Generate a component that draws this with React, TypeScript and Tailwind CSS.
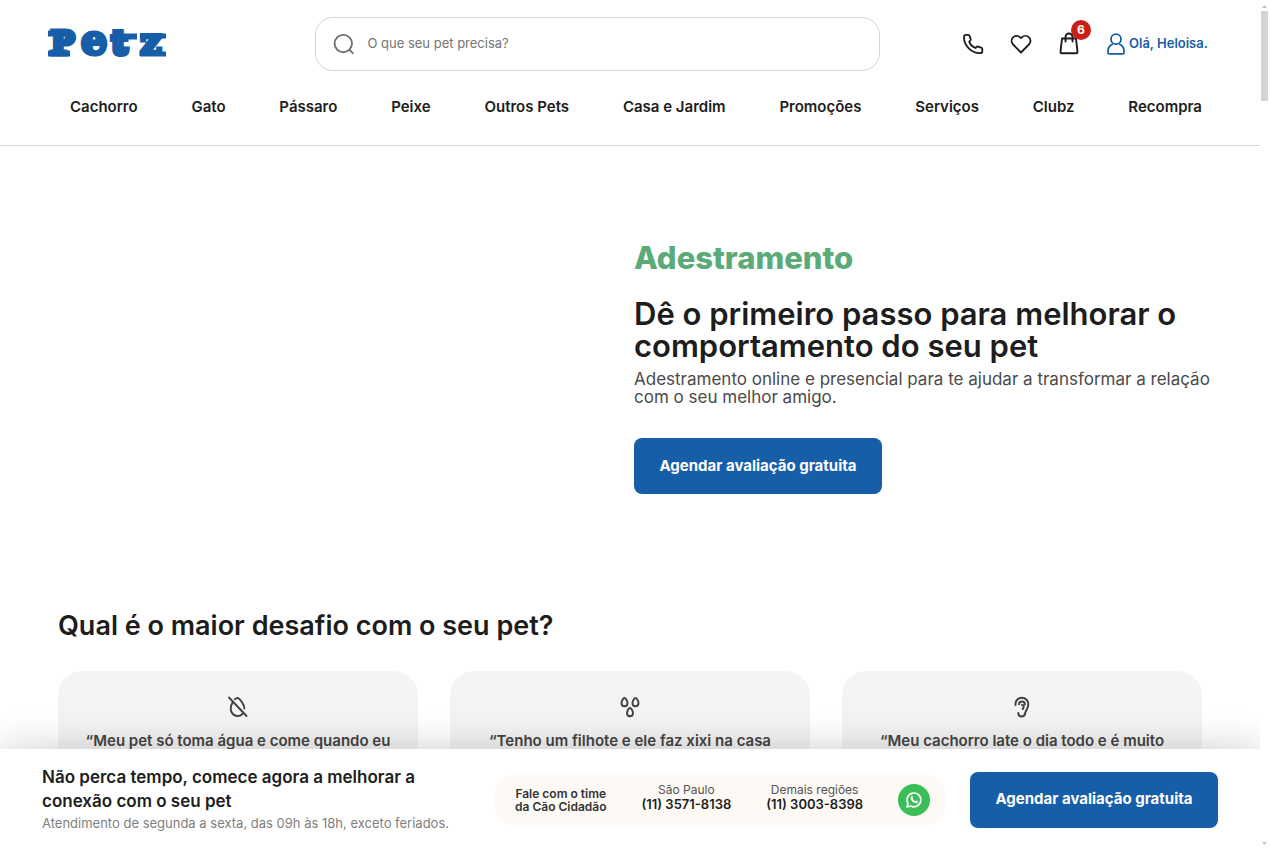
import type { ReactNode } from "react";

const navItems = [
  "Cachorro",
  "Gato",
  "Pássaro",
  "Peixe",
  "Outros Pets",
  "Casa e Jardim",
  "Promoções",
  "Serviços",
  "Clubz",
  "Recompra",
];

function Logo() {
  return (
    <svg
      className="-my-4"
      width="124"
      height="60"
      viewBox="0 -4 124 60"
      role="img"
      aria-label="Petz"
      fill="#175ea9"
      stroke="#175ea9"
      fontWeight="700"
      fontFamily="'DejaVu Serif', serif"
    >
      <path d="M0 12.500h22v6H0zM0 32.500h22v6H0zM66 15.500h23v6H66zM92 15.500h26v5H92zM92 33.500h26v5H92z" stroke="none" />
      <text y="36" x="3" fontSize="31" strokeWidth="5">P</text>
      <text y="36" x="33" fontSize="41" strokeWidth="4">e</text>
      <text y="36" x="64" fontSize="32" strokeWidth="6">t</text>
      <text y="36" x="92" fontSize="38" strokeWidth="4">z</text>
    </svg>
  );
}

function SearchIcon() {
  return (
    <svg width="24" height="24" viewBox="0 0 24 24" fill="none" stroke="#6f6f6f" strokeWidth="2" strokeLinecap="round">
      <circle cx="11" cy="11.5" r="9.3" />
      <path d="m17.700 18.200 3.500 3.500" />
    </svg>
  );
}

function PhoneIcon() {
  return (
    <svg width="24" height="24" viewBox="0 0 24 24" fill="none" stroke="currentColor" strokeWidth="1.8" strokeLinejoin="round">
      <path d="M3 5.2C3 4 4 2.9 5.200 2.900h2c.7 0 1.300.4 1.500 1.100l1 3.100c.2.600 0 1.200-.500 1.600l-1 .9c1 2.900 3.400 5.300 6.300 6.400l1-1c.4-.5 1-.6 1.600-.4l3.100 1c.7.2 1.100.8 1.100 1.500v1.800c0 1.300-1 2.300-2.300 2.300C10.400 21.200 3 13.600 3 5.200Z" />
    </svg>
  );
}

function HeartIcon() {
  return (
    <svg width="24" height="24" viewBox="0 0 24 24" fill="none" stroke="currentColor" strokeWidth="1.800" strokeLinejoin="round">
      <path d="M12 20.500 4.100 12.500A5.200 5.200 0 0 1 4 5.300c2-2 5.200-2 7.200 0l.8.8.8-.8c2-2 5.200-2 7.200 0s2 5.200-.1 7.200Z" />
    </svg>
  );
}

function BagIcon() {
  return (
    <svg width="24" height="24" viewBox="0 0 24 24" fill="none" stroke="currentColor" strokeWidth="1.900" strokeLinejoin="round" strokeLinecap="round">
      <path d="M5 6.500h14l1.500 13.400c.1.700-.4 1.300-1.100 1.300H4.600c-.7 0-1.200-.6-1.100-1.300Z" />
      <path d="M8.500 9.500V5a3.500 3.500 0 0 1 7 0v4.500" />
    </svg>
  );
}

function UserIcon() {
  return (
    <svg width="18" height="22" viewBox="0 0 18 22" fill="none" stroke="currentColor" strokeWidth="1.800" strokeLinejoin="round">
      <circle cx="9" cy="6.200" r="5" />
      <path d="M5.800 11.200C3 12.200 1 15 1 18.300v1.200c0 .8.600 1.400 1.400 1.400h13.200c.8 0 1.400-.6 1.400-1.400v-1.200c0-3.300-2-6.100-4.800-7.100" />
    </svg>
  );
}

function DropOffIcon() {
  return (
    <svg width="24" height="24" viewBox="0 0 24 24" fill="none" stroke="#3f4246" strokeWidth="1.900" strokeLinecap="round">
      <path d="M3 2.500 20.500 21" />
      <path d="M9 4.200c1.500-1.700 3.300-1.500 4.600 0 2.500 2.900 4.700 6.300 4.700 9.200" />
      <path d="M6.400 7.700C5.300 9.700 4.700 11.700 4.700 13.500c0 4 2.900 7.500 6.900 7.500 2 0 3.700-.8 4.900-2.200" />
    </svg>
  );
}

function DropsIcon() {
  return (
    <svg width="24" height="24" viewBox="0 0 24 24" fill="none" stroke="#3f4246" strokeWidth="1.900" strokeLinejoin="round">
      <path id="drop" d="M6.500 3C5.300 3 3.500 5.800 3.500 8c0 2 1.200 3.300 3 3.300S9.500 10 9.500 8C9.500 5.800 7.700 3 6.500 3Z" />
      <use href="#drop" x="11" />
      <use href="#drop" x="5.500" y="10" />
    </svg>
  );
}

function EarIcon() {
  return (
    <svg width="24" height="24" viewBox="0 0 24 24" fill="none" stroke="#3f4246" strokeWidth="2" strokeLinecap="round" strokeLinejoin="round">
      <path d="M5.500 10V9c0-3.600 2.800-6.300 6.300-6.300S18.300 5.500 18.300 9c0 4.500-2.600 6.300-3.200 9.500-.3 1.800-1.500 2.900-3.300 2.900-2.100 0-3.500-1.500-3.500-3.500" />
      <path d="M9 9.300c0-1.700 1.200-2.900 2.900-2.900s3 1.300 3 2.900M12 10c1.600 0 2 .9 1.600 2.100l-.8 1.900" />
    </svg>
  );
}

function WhatsAppIcon() {
  return (
    <svg width="16" height="16" viewBox="0 0 16 16" fill="none">
      <path d="M1 15l1-3.600A6.900 6.900 0 1 1 4.700 14Z" stroke="#fff" strokeWidth="1.700" strokeLinejoin="round" />
      <path d="M5.500 4.300c.3-.3.800-.3 1 .1l.6 1.300c.1.300 0 .5-.5 1.100.5 1.100 1.400 1.900 2.600 2.400.6-.7.800-.9 1.100-.8l1.300.6c.4.200.4.500.3.900-.3 1-1.400 1.500-2.400 1.200-2.500-.6-4.500-2.500-4.900-4.700-.1-.8.300-1.600.9-2.100Z" fill="#fff" />
    </svg>
  );
}

const challenges: { icon: ReactNode; text: string }[] = [
  { icon: <DropOffIcon />, text: "“Meu pet só toma água e come quando eu" },
  { icon: <DropsIcon />, text: "“Tenho um filhote e ele faz xixi na casa" },
  { icon: <EarIcon />, text: "“Meu cachorro late o dia todo e é muito" },
];

function Phone({ region, number }: { region: string; number: string }) {
  return (
    <a href="#telefone" className="block pb-1.5 text-center">
      <span className="block text-[12px] leading-[14px] text-[#555]">{region}</span>
      <span className="block text-[13px] font-semibold leading-[14px]">{number}</span>
    </a>
  );
}

function Header() {
  return (
    <header className="shrink-0 border-b border-[#d4d4d4] pb-[27px]">
      <div className="flex items-center px-12 pt-[17px]">
        <a href="#inicio" className="w-[118px] shrink-0">
          <Logo />
        </a>
        <label className="mr-[81px] ml-[149px] flex h-[54px] flex-1 items-center gap-3 rounded-[18px] border border-[#d4d4d4] pr-4 pl-[17px]">
          <SearchIcon />
          <input
            type="search"
            aria-label="Buscar"
            placeholder="O que seu pet precisa?"
            className="w-full bg-transparent text-[13px] outline-none placeholder:text-[#757575]"
          />
        </label>
        <div className="flex w-[251px] shrink-0 items-center gap-6">
          <button type="button" aria-label="Telefone"><PhoneIcon /></button>
          <button type="button" aria-label="Favoritos"><HeartIcon /></button>
          <button type="button" aria-label="Sacola" className="relative">
            <BagIcon />
            <span className="absolute -top-3 left-3.5 flex size-5 items-center justify-center rounded-full bg-[#c91f16] text-[12px] font-bold text-white">6</span>
          </button>
          <a href="#conta" className="ml-0.5 flex items-center gap-1 text-[13px] font-semibold whitespace-nowrap text-[#175ea9]">
            <UserIcon />
            Olá, Heloisa.
          </a>
        </div>
      </div>
      <nav className="flex justify-between pt-[25px] pr-[58px] pl-[70px] text-[15px] leading-[22px] font-semibold">
        {navItems.map((item) => (
          <a key={item} href="#menu">{item}</a>
        ))}
      </nav>
    </header>
  );
}

function CallToAction() {
  return (
    <button type="button" className="h-14 w-[248px] shrink-0 rounded-lg bg-[#175ea9] text-[15px] font-bold text-white">
      Agendar avaliação gratuita
    </button>
  );
}

export default function App() {
  return (
    <div className="flex h-screen overflow-hidden bg-white font-['Inter',sans-serif] text-[#1d1d1d]">
      <div className="flex min-w-0 flex-1 flex-col">
        <Header />
        <main className="min-h-0 flex-1 overflow-hidden px-[58px]">
          <section className="grid grid-cols-2 gap-2 pt-24">
            <div className="col-start-2">
              <p className="text-[31px] leading-8 font-extrabold text-[#5aab78]">Adestramento</p>
              <h1 className="mt-6 text-[31px] leading-8 font-semibold">
                Dê o primeiro passo para melhorar o comportamento do seu pet
              </h1>
              <p className="mt-2 mb-8 text-[17px] leading-[18px] whitespace-nowrap text-[#4a4a4a]">
                Adestramento online e presencial para te ajudar a transformar a relação
                <br />
                com o seu melhor amigo.
              </p>
              <CallToAction />
            </div>
          </section>
          <section className="pt-[114px]">
            <h2 className="text-[27px] leading-9 font-semibold">Qual é o maior desafio com o seu pet?</h2>
            <div className="mt-[27px] grid grid-cols-3 gap-8">
              {challenges.map(({ icon, text }) => (
                <article key={text} className="flex h-60 flex-col items-center rounded-3xl bg-[#f4f4f4] px-5 pt-6">
                  {icon}
                  <p className="mt-3 text-center text-[15px] leading-5 font-semibold whitespace-nowrap text-[#444]">{text}</p>
                </article>
              ))}
            </div>
          </section>
        </main>
        <footer className="z-10 flex h-[101px] shrink-0 items-center justify-between bg-white pr-[42px] pb-0.5 pl-[42px] shadow-[0_0_40px_rgba(0,0,0,0.2)]">
          <div className="w-[428px]">
            <p className="text-[17px] leading-6 font-semibold">
              Não perca tempo, comece agora a melhorar a conexão com o seu pet
            </p>
            <p className="text-[13px] leading-5 whitespace-nowrap text-[#808080]">
              Atendimento de segunda a sexta, das 09h às 18h, exceto feriados.
            </p>
          </div>
          <div className="flex items-center gap-6 pt-0.5">
            <div className="flex h-[50px] w-[452px] items-center justify-between rounded-[20px] bg-[#fdf9f4] pr-4 pl-[21px]">
              <p className="text-center text-[12px] leading-[13px] font-semibold text-[#333]">
                Fale com o time
                <br />
                da Cão Cidadão
              </p>
              <Phone region="São Paulo" number="(11) 3571-8138" />
              <Phone region="Demais regiões" number="(11) 3003-8398" />
              <a href="#whatsapp" aria-label="WhatsApp" className="flex size-8 items-center justify-center rounded-full bg-[#3bbd58]">
                <WhatsAppIcon />
              </a>
            </div>
            <CallToAction />
          </div>
        </footer>
      </div>
      <div aria-hidden="true" className="z-20 flex w-[10px] shrink-0 flex-col items-start justify-between bg-white pt-[5px] pb-[5px] pl-px">
        <div className="flex flex-col items-center gap-[3px]">
          <svg width="5" height="3" viewBox="0 0 5 3" fill="#c4c4c4"><path d="M0 3 2.500 0 5 3Z" /></svg>
          <div className="h-[90px] w-[7px] bg-[#d4d4d4]" />
        </div>
        <svg className="ml-px" width="5" height="3" viewBox="0 0 5 3" fill="#c4c4c4"><path d="M0 0 2.500 3 5 0Z" /></svg>
      </div>
    </div>
  );
}
